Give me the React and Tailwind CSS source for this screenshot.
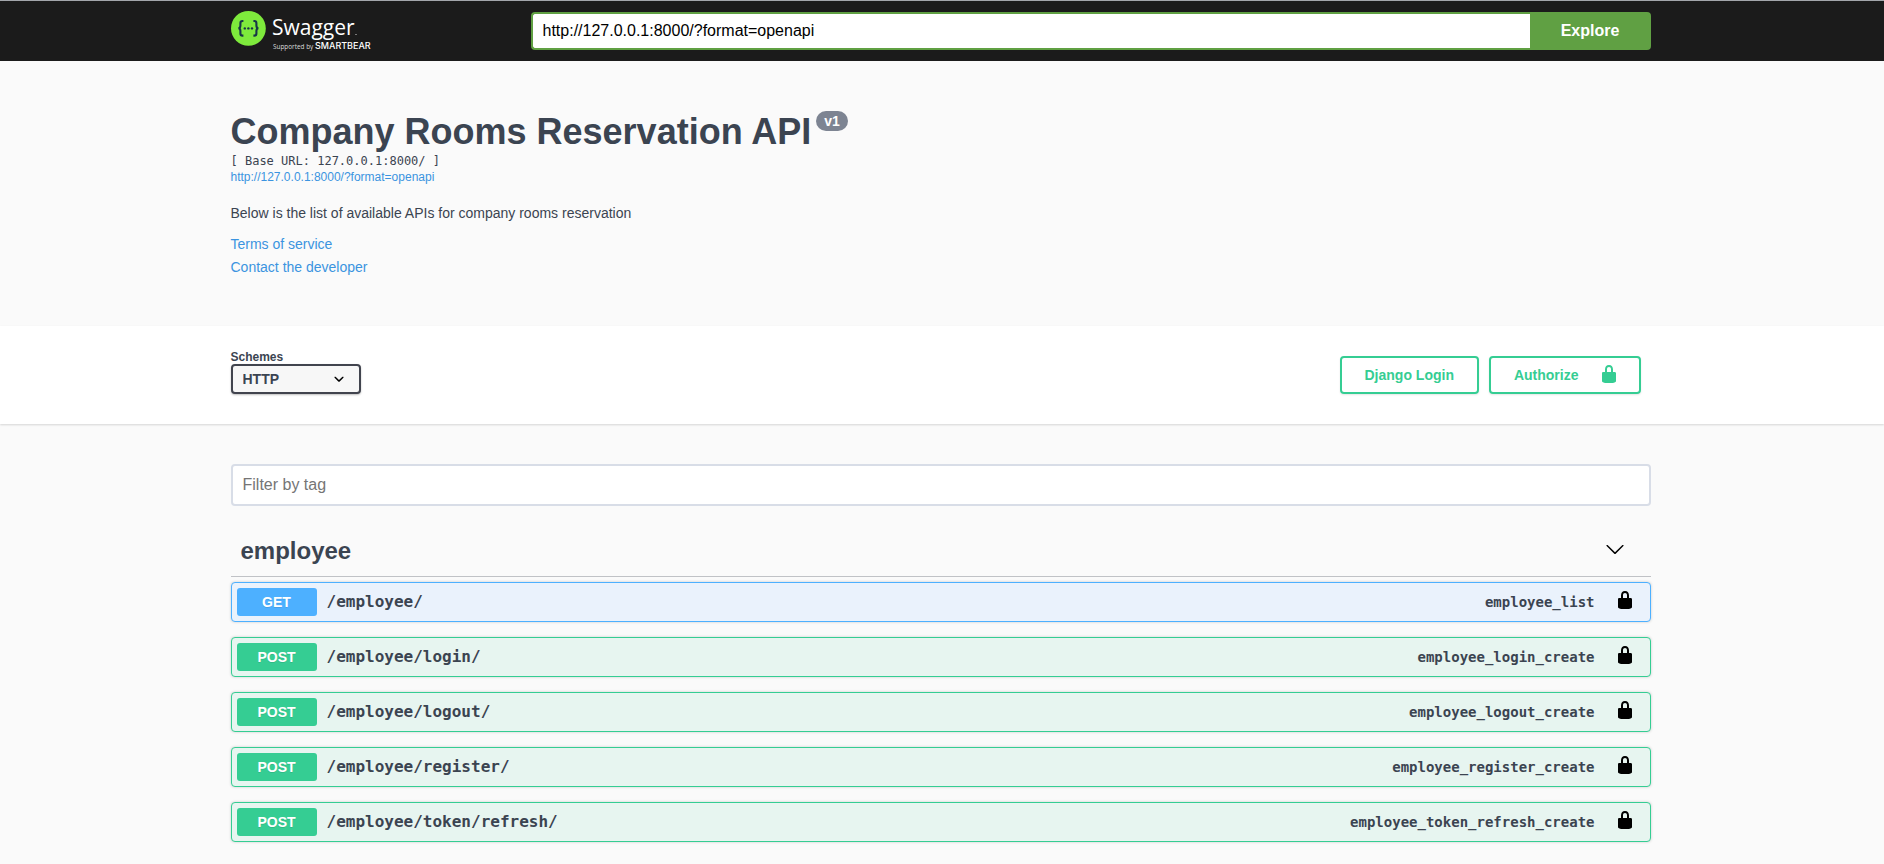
import React from "react";

const operations = [
  { method: "GET", path: "/employee/", id: "employee_list" },
  { method: "POST", path: "/employee/login/", id: "employee_login_create" },
  { method: "POST", path: "/employee/logout/", id: "employee_logout_create" },
  { method: "POST", path: "/employee/register/", id: "employee_register_create" },
  { method: "POST", path: "/employee/token/refresh/", id: "employee_token_refresh_create" },
];

const methodStyles = {
  GET: { row: "border-[#4db0ff] bg-[#eaf2fc]", badge: "bg-[#4db0ff]" },
  POST: { row: "border-[#35cd93] bg-[#e7f5f0]", badge: "bg-[#35cd93]" },
};

function Wrapper({ className = "", children }) {
  return <div className={`mx-auto w-full max-w-[1463px] pl-5 pr-[23px] ${className}`}>{children}</div>;
}

function LockIcon() {
  return (
    <svg viewBox="0 0 20 20" className="size-5 shrink-0 fill-current" aria-hidden="true">
      <path d="M15.8 8H14V5.6C14 2.703 12.665 1 10 1 7.334 1 6 2.703 6 5.6V8H4c-.553 0-1 .646-1 1.199V17c0 .549.428 1.139.951 1.307l1.197.387C5.672 18.861 6.55 19 7.1 19h5.8c.549 0 1.428-.139 1.951-.307l1.196-.387c.524-.167.953-.757.953-1.306V9.199C17 8.646 16.352 8 15.8 8zM12 8H8V5.199C8 3.754 8.797 3 10 3c1.203 0 2 .754 2 2.199V8z" />
    </svg>
  );
}

function ArrowDown() {
  return (
    <svg viewBox="0 0 20 20" className="size-5 fill-current" aria-hidden="true">
      <path d="M17.418 6.109c.272-.268.709-.268.979 0s.271.701 0 .969l-7.908 7.83c-.27.268-.707.268-.979 0l-7.908-7.83c-.27-.268-.27-.701 0-.969.271-.268.709-.268.979 0L10 13.25l7.418-7.141z" />
    </svg>
  );
}

function Chevron() {
  return (
    <svg viewBox="0 0 20 20" className="pointer-events-none absolute top-[5px] right-3 size-5 fill-black" aria-hidden="true">
      <path d="M13.418 7.859c.271-.268.709-.268.978 0 .27.268.272.701 0 .969l-3.908 3.83c-.27.268-.707.268-.979 0l-3.908-3.83c-.27-.267-.27-.701 0-.969.271-.268.709-.268.978 0L10 11l3.418-3.141z" />
    </svg>
  );
}

function Logo() {
  return (
    <a href="#" aria-label="Swagger" className="block shrink-0">
      <svg width="150" height="38" viewBox="0 0 150 38" className="overflow-visible">
        <circle cx="17.4" cy="16.4" r="17.4" fill="#7eea3c" />
        <g fill="none" stroke="#173647" strokeWidth="2.1">
          <path d="M12.4 9h-.9c-1.5 0-2.1.7-2.1 2.2v2.4c0 1.8-.5 2.6-2 2.7 1.5.1 2 .9 2 2.7v2.4c0 1.5.6 2.2 2.1 2.2h.9" />
          <path d="M22.4 9h.9c1.5 0 2.1.7 2.1 2.2v2.4c0 1.8.5 2.6 2 2.7-1.5.1-2 .9-2 2.7v2.4c0 1.5-.6 2.2-2.1 2.2h-.9" />
        </g>
        <g fill="#173647">
          <circle cx="13.8" cy="16.4" r="1.2" />
          <circle cx="17.4" cy="16.4" r="1.2" />
          <circle cx="21" cy="16.4" r="1.2" />
        </g>
        <text x="41" y="23" fill="#fff" fontSize="21" fontFamily="'Open Sans', sans-serif">Swagger</text>
        <rect x="124" y="22" width="2" height="1" fill="#777" />
        <text x="42" y="37" fill="#ddd" fontSize="6.4" fontFamily="'Open Sans', sans-serif">Supported by</text>
        <text x="84" y="37" fill="#fff" fontSize="9" fontWeight="500" fontFamily="Inter, sans-serif">SMARTBEAR</text>
      </svg>
    </a>
  );
}

function Topbar() {
  return (
    <header className="border-t border-[#a3a6ab] bg-[#1b1b1b] pt-[11px] pb-[11px]">
      <Wrapper className="flex h-[38px] items-start justify-between gap-10">
        <Logo />
        <form className="flex h-[38px] w-full max-w-[1120px]" onSubmit={(e) => e.preventDefault()}>
          <input
            type="text"
            aria-label="API definition URL"
            defaultValue="http://127.0.0.1:8000/?format=openapi"
            className="min-w-0 flex-1 rounded-l border-2 border-r-0 border-[#60a043] bg-white px-[10px] text-base text-black outline-none"
          />
          <button type="submit" className="w-[121px] rounded-r bg-[#60a043] text-base font-bold text-white">
            Explore
          </button>
        </form>
      </Wrapper>
    </header>
  );
}

function Info() {
  return (
    <Wrapper className="pt-[50px] pb-[47px]">
      <div className="flex items-start gap-[5px]">
        <h1 className="text-4xl leading-[42px] font-bold">Company Rooms Reservation API</h1>
        <span className="rounded-full bg-[#7d8492] px-2 text-sm leading-5 font-bold text-white">v1</span>
      </div>
      <p className="font-['DejaVu_Sans_Mono',monospace] text-xs leading-4">[ Base URL: 127.0.0.1:8000/ ]</p>
      <a href="#" className="block w-fit text-xs leading-[17px] text-[#3b94e0]">
        http://127.0.0.1:8000/?format=openapi
      </a>
      <p className="mt-4 text-sm leading-[23px]">Below is the list of available APIs for company rooms reservation</p>
      <div className="mt-2 flex flex-col items-start text-sm leading-[23px] text-[#3b94e0]">
        <a href="#">Terms of service</a>
        <a href="#">Contact the developer</a>
      </div>
    </Wrapper>
  );
}

function SchemeBar() {
  return (
    <section className="bg-white pt-6 pb-[30px] shadow-[0_1px_2px_0_rgba(0,0,0,0.15)]">
      <Wrapper className="flex items-end justify-between">
        <div className="flex flex-col">
          <label htmlFor="schemes" className="text-xs leading-[14px] font-bold">
            Schemes
          </label>
          <div className="relative">
            <select
              id="schemes"
              className="block h-[30px] w-[130px] appearance-none rounded border-2 border-[#41444e] bg-[#f7f7f7] px-[10px] text-sm leading-5 font-bold shadow-[0_1px_2px_0_rgba(0,0,0,0.25)]"
            >
              <option>HTTP</option>
            </select>
            <Chevron />
          </div>
        </div>
        <div className="flex gap-[10px] pr-[10px] text-sm font-bold text-[#35cd93]">
          <button className="h-[38px] rounded border-2 border-current px-[23px] shadow-[0_1px_2px_rgba(0,0,0,0.1)]">
            Django Login
          </button>
          <button className="flex h-[38px] items-center gap-5 rounded border-2 border-current pr-5 pl-[23px] shadow-[0_1px_2px_rgba(0,0,0,0.1)]">
            Authorize
            <span className="pb-[2px]">
              <LockIcon />
            </span>
          </button>
        </div>
      </Wrapper>
    </section>
  );
}

function Operation({ method, path, id }) {
  const styles = methodStyles[method];
  return (
    <li className={`flex h-10 items-center rounded border p-[5px] shadow-[0_0_3px_rgba(0,0,0,0.19)] ${styles.row}`}>
      <button className="flex min-w-0 flex-1 items-center text-left font-['DejaVu_Sans_Mono',monospace] font-bold">
        <span
          className={`w-20 rounded-[3px] text-center font-['Liberation_Sans',sans-serif] text-sm leading-7 text-white [text-shadow:0_1px_0_rgba(0,0,0,0.1)] ${styles.badge}`}
        >
          {method}
        </span>
        <span className="flex-1 px-[10px] text-base">{path}</span>
        <span className="text-sm">{id}</span>
      </button>
      <button aria-label={`Authorize ${id}`} className="pr-[10px] pb-1 pl-5 text-black">
        <LockIcon />
      </button>
    </li>
  );
}

export default function App() {
  return (
    <div className="min-h-screen bg-[#fafafa] font-['Liberation_Sans',Arial,sans-serif] text-[#3b4451]">
      <Topbar />
      <Info />
      <SchemeBar />
      <Wrapper className="pt-10 pb-[22px]">
        <input
          type="text"
          aria-label="Filter by tag"
          placeholder="Filter by tag"
          className="block h-[42px] w-full rounded border-2 border-[#d8dde7] bg-white px-[10px] text-base outline-none placeholder:text-[#757575]"
        />
        <section className="mt-5">
          <div className="flex h-[51px] items-center justify-between border-b border-[#3b4151]/30 pr-[26px] pl-[10px]">
            <h2 className="text-2xl font-bold">employee</h2>
            <button aria-label="Collapse employee" className="pb-1 text-black">
              <ArrowDown />
            </button>
          </div>
          <ul className="mt-[5px] flex flex-col gap-[15px]">
            {operations.map((op) => (
              <Operation key={op.id} {...op} />
            ))}
          </ul>
        </section>
      </Wrapper>
    </div>
  );
}
